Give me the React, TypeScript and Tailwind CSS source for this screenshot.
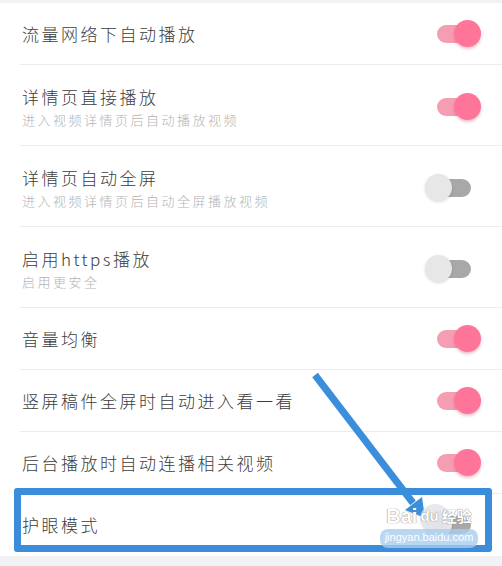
type Item = {
  title: string;
  desc?: string;
  on: boolean;
};

const items: Item[] = [
  { title: "流量网络下自动播放", on: true },
  { title: "详情页直接播放", desc: "进入视频详情页后自动播放视频", on: true },
  { title: "详情页自动全屏", desc: "进入视频详情页后自动全屏播放视频", on: false },
  { title: "启用https播放", desc: "启用更安全", on: false },
  { title: "音量均衡", on: true },
  { title: "竖屏稿件全屏时自动进入看一看", on: true },
  { title: "后台播放时自动连播相关视频", on: true },
  { title: "护眼模式", on: false },
];

function Toggle({ on }: { on: boolean }) {
  return (
    <div className="relative h-[28px] w-[56px] shrink-0">
      <div
        className={
          on
            ? "absolute left-[12px] top-[5px] h-[18px] w-[34px] rounded-full bg-[#f59db2]"
            : "absolute left-[12px] top-[5px] h-[18px] w-[34px] rounded-full bg-[#a8a8a8]"
        }
      />
      <div
        className={
          on
            ? "absolute left-[29px] top-0 h-[27px] w-[27px] rounded-full bg-[#ff7499] shadow-[0_2px_3px_rgba(200,80,110,0.35)]"
            : "absolute left-0 top-0 h-[27px] w-[27px] rounded-full bg-[#e7e7e7] shadow-[0_1px_3px_rgba(0,0,0,0.15)]"
        }
      />
    </div>
  );
}

function Row({ item, last }: { item: Item; last: boolean }) {
  return (
    <div
      className={
        (item.desc ? "h-[81px] pt-1 " : "h-[62px] ") +
        (last ? "border-b-0 " : "border-b border-[#ececec] ") +
        "ml-5 flex items-center justify-between pl-[2px] pr-[21px]"
      }
    >
      <div className="flex flex-col gap-[3px]">
        <span className="text-[17px] font-light leading-[22px] tracking-[2.5px] text-[#3c3c3c]">
          {item.title}
        </span>
        {item.desc && (
          <span className="text-[13px] font-light leading-[18px] tracking-[2.5px] text-[#b4b4b4]">
            {item.desc}
          </span>
        )}
      </div>
      <Toggle on={item.on} />
    </div>
  );
}

export default function App() {
  return (
    <div
      className="relative h-[566px] w-[502px] overflow-hidden bg-[#f1f2f4]"
      style={{ fontFamily: '"Noto Sans CJK SC", "Noto Sans", sans-serif' }}
    >
      <div className="h-[3px]" />
      <div className="bg-white">
        {items.map((item, i) => (
          <Row key={item.title} item={item} last={i === items.length - 1} />
        ))}
      </div>

      {/* highlight box */}
      <div className="pointer-events-none absolute left-[14px] top-[488px] h-[64px] w-[478px] rounded-[3px] border-[7px] border-[#3b8ddb]" />

      {/* arrow */}
      <svg
        className="pointer-events-none absolute left-0 top-0"
        width="502"
        height="566"
        viewBox="0 0 502 566"
      >
        <line x1="315" y1="375" x2="413" y2="503" stroke="#3a8edc" strokeWidth="7" />
        <polygon points="425,518 422,497 405,510" fill="#3a8edc" />
      </svg>

      {/* watermark */}
      <div className="pointer-events-none absolute left-[380px] top-[504px] flex w-[98px] flex-col items-center">
        <div className="absolute left-[40px] top-0 h-[30px] w-[30px] rounded-full bg-[#e2e4e8] opacity-80" />
        <div className="relative flex items-end gap-[3px] font-['Liberation_Sans',sans-serif] text-[20px] font-bold leading-[24px] text-white [text-shadow:0_0_1px_#8a8a8a,0_0_1px_#8a8a8a]">
          <span>Bai</span>
          <span className="text-[15px]">du</span>
          <span className="text-[15px]" style={{ fontFamily: '"Noto Sans CJK SC", sans-serif' }}>
            经验
          </span>
        </div>
        <div className="relative mt-[1px] w-full rounded-[8px] bg-[#a9cdee]/80 px-1 pb-[2px] text-center font-['Liberation_Sans',sans-serif] text-[11px] leading-[17px] text-white">
          jingyan.baidu.com
        </div>
      </div>
    </div>
  );
}
